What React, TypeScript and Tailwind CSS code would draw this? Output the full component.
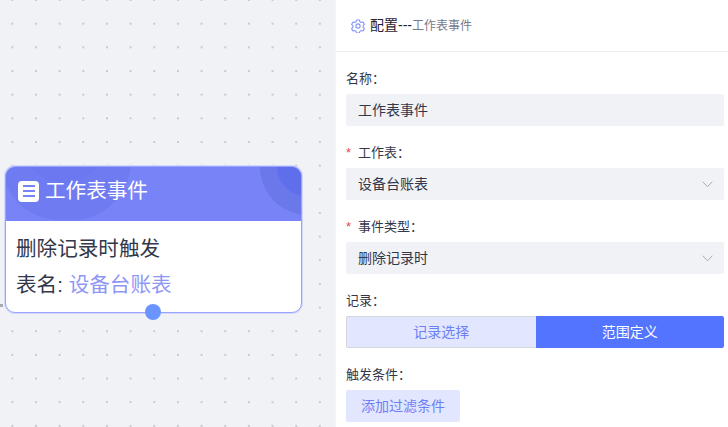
const cjk = "font-['Liberation_Sans','Noto_Sans_CJK_SC',sans-serif]";

function Chevron() {
  return (
    <svg className="w-[11px] h-[7px] text-[#a9abb5]" viewBox="0 0 11 7" fill="none" stroke="currentColor" strokeWidth="1">
      <path d="M0.7 0.7 L5.5 5.8 L10.3 0.7" />
    </svg>
  );
}

function GearIcon() {
  return (
    <svg className="w-[14px] h-[14px] text-[#8495f2]" viewBox="0 0 24 24" fill="none" stroke="currentColor" strokeWidth="1.9" strokeLinejoin="round">
      <path d="M9.6 1.6 h4.8 l0.8 3 l2.4 1.4 l3 -0.8 l2.4 4.1 l-2.2 2.2 v2.8 l2.2 2.2 l-2.4 4.1 l-3 -0.8 l-2.4 1.4 l-0.8 3 h-4.8 l-0.8 -3 l-2.4 -1.4 l-3 0.8 l-2.4 -4.1 l2.2 -2.2 v-2.8 l-2.2 -2.2 l2.4 -4.1 l3 0.8 l2.4 -1.4 Z" />
      <circle cx="12" cy="12" r="3.6" />
    </svg>
  );
}

function Field({ label, required, children }: { label: string; required?: boolean; children: React.ReactNode }) {
  return (
    <div className="mb-[16px]">
      <div className="h-[26px] text-[13px] leading-[22px] text-[#33374a]">
        {required && <span className="text-[#e5484d] mr-[7px]">*</span>}
        {label}：
      </div>
      {children}
    </div>
  );
}

function InputBox({ value, arrow }: { value: string; arrow?: boolean }) {
  return (
    <div className="h-[32px] rounded-[2px] bg-[#f1f2f6] pl-[12px] pr-[11px] flex items-center justify-between text-[14px] text-[#33374a]">
      <span>{value}</span>
      {arrow && <Chevron />}
    </div>
  );
}

function NodeCard() {
  return (
    <div className="absolute left-[5px] top-[166px] w-[297px] h-[147px] rounded-[10px] border border-[#98a3fb] bg-white shadow-[0_0_0_1px_#d4d8fa]">
      <div className="relative h-[54px] overflow-hidden rounded-t-[9px] bg-[#7783f6] flex items-center pl-[12px] pb-[6px]">
        <div className="absolute left-[-5px] top-[-65px] w-[130px] h-[118px] rounded-full bg-[#6f7cf1]" />
        <div className="absolute left-[15px] top-[-70px] w-[86px] h-[86px] rounded-full bg-[#6b78f0]" />
        <div className="absolute left-[254px] top-[-48px] w-[96px] h-[96px] rounded-full bg-[#6b78e9]" />
        <div className="absolute left-[271px] top-[-29px] w-[58px] h-[58px] rounded-full bg-[#5f6fec]" />
        <div className="relative w-[21px] h-[21px] rounded-[4px] bg-white flex flex-col items-center justify-center gap-[3px]">
          <span className="w-[12px] h-[2px] bg-[#7783f6]" />
          <span className="w-[12px] h-[2px] bg-[#7783f6]" />
          <span className="w-[12px] h-[2px] bg-[#7783f6]" />
        </div>
        <span className="relative ml-[6px] text-[20.6px] leading-[28px] text-white">工作表事件</span>
      </div>
      <div className="pl-[10px] pt-[10px] text-[20.6px] leading-[36px] text-[#33374a]">
        <div>删除记录时触发</div>
        <div>
          表名: <span className="text-[#8f97f5]">设备台账表</span>
        </div>
      </div>
      <div className="absolute left-[139px] top-[137px] w-[16px] h-[16px] rounded-full bg-[#6a95ff]" />
    </div>
  );
}

export default function App() {
  return (
    <div className={`${cjk} w-[728px] h-[427px] overflow-hidden flex bg-white`}>
      {/* canvas */}
      <div className="relative w-[335px] h-full bg-[#f1f2f6] bg-[radial-gradient(circle,#c8cad0_0.7px,transparent_1.1px)] bg-[size:23.67px_23.67px] bg-[position:0.5px_-11.8px]">
        <NodeCard />
        <div className="absolute left-0 top-[304px] w-[3px] h-[3px] bg-[#a9abb3]" />
      </div>

      {/* config panel */}
      <div className="flex-1 h-full bg-white border-l border-[#f4f5f8]">
        <div className="h-[52px] border-b border-[#eeeff3] pl-[15px] flex items-center">
          <GearIcon />
          <span className="ml-[5px] text-[14px] text-[#1f2233]">配置---</span>
          <span className="text-[12px] text-[#777a88]">工作表事件</span>
        </div>
        <div className="pl-[10px] pr-[4px] pt-[16px]">
          <Field label="名称">
            <InputBox value="工作表事件" />
          </Field>
          <Field label="工作表" required>
            <InputBox value="设备台账表" arrow />
          </Field>
          <Field label="事件类型" required>
            <InputBox value="删除记录时" arrow />
          </Field>
          <Field label="记录">
            <div className="flex h-[32px] text-[14px]">
              <div className="flex-1 flex items-center justify-center rounded-l-[2px] border border-r-0 border-[#d5d6dc] bg-[#e2e7ff] text-[#6f80f5]">
                记录选择
              </div>
              <div className="flex-1 flex items-center justify-center rounded-r-[2px] bg-[#5274ff] text-white">
                范围定义
              </div>
            </div>
          </Field>
          <Field label="触发条件">
            <div className="w-[114px] h-[32px] rounded-[2px] bg-[#e2e7ff] flex items-center justify-center text-[14px] text-[#6f80f5]">
              添加过滤条件
            </div>
          </Field>
        </div>
      </div>
    </div>
  );
}
